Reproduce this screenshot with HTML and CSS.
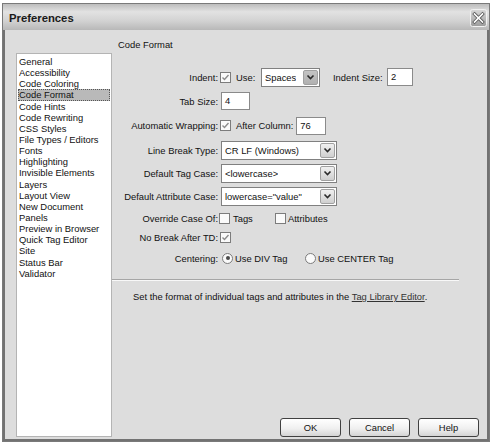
FILE: index.html
```html
<!DOCTYPE html>
<html>
<head>
<meta charset="utf-8">
<title>Preferences</title>
<link rel="stylesheet" href="styles.css">
</head>
<body>
<div class="window">
  <div class="titlebar">
    <span class="title">Preferences</span>
    <span class="close">
      <svg width="17" height="18" viewBox="0 0 17 18">
        <defs>
          <linearGradient id="cg" x1="0" y1="0" x2="0" y2="1">
            <stop offset="0" stop-color="#d8d8d8"/>
            <stop offset="1" stop-color="#9c9c9c"/>
          </linearGradient>
        </defs>
        <rect x="0.5" y="0.5" width="16" height="17" rx="2" fill="url(#cg)" stroke="#f2f2f2"/>
        <path d="M4.5 5 L12.5 13 M12.5 5 L4.5 13" stroke="#5a5a5a" stroke-width="3.2" stroke-linecap="square"/>
        <path d="M4.5 5 L12.5 13 M12.5 5 L4.5 13" stroke="#ffffff" stroke-width="1.6" stroke-linecap="square"/>
      </svg>
    </span>
  </div>
  <div class="client">
    <div class="category-list">
      <div class="item">General</div>
      <div class="item">Accessibility</div>
      <div class="item">Code Coloring</div>
      <div class="item selected">Code Format</div>
      <div class="item">Code Hints</div>
      <div class="item">Code Rewriting</div>
      <div class="item">CSS Styles</div>
      <div class="item">File Types / Editors</div>
      <div class="item">Fonts</div>
      <div class="item">Highlighting</div>
      <div class="item">Invisible Elements</div>
      <div class="item">Layers</div>
      <div class="item">Layout View</div>
      <div class="item">New Document</div>
      <div class="item">Panels</div>
      <div class="item">Preview in Browser</div>
      <div class="item">Quick Tag Editor</div>
      <div class="item">Site</div>
      <div class="item">Status Bar</div>
      <div class="item">Validator</div>
    </div>
    <div class="panel">
      <div class="panel-title">Code Format</div>
      <div class="form">
        <div class="row h24">
          <span class="label">Indent:</span>
          <span class="check ml2 checked"><svg width="9" height="9" viewBox="0 0 9 9"><path d="M1.5 4.5 L3.5 6.5 L7.5 2" fill="none" stroke="#8c8c8c" stroke-width="1.4"/></svg></span>
          <span class="text w-use">Use:</span>
          <span class="select w59"><span class="value">Spaces</span><span class="arrow pressed"><svg width="9" height="6" viewBox="0 0 9 6"><path d="M1.5 1.5 L4.5 4.5 L7.5 1.5" fill="none" stroke="#2a2a2a" stroke-width="1.6"/></svg></span></span>
          <span class="text w-isize">Indent Size:</span>
          <span class="input w26">2</span>
        </div>
        <div class="row h24">
          <span class="label">Tab Size:</span>
          <span class="input ml3 w29">4</span>
        </div>
        <div class="row h25">
          <span class="label">Automatic Wrapping:</span>
          <span class="check ml2 checked"><svg width="9" height="9" viewBox="0 0 9 9"><path d="M1.5 4.5 L3.5 6.5 L7.5 2" fill="none" stroke="#8c8c8c" stroke-width="1.4"/></svg></span>
          <span class="text w-after">After Column:</span>
          <span class="input w30">76</span>
        </div>
        <div class="row h24">
          <span class="label">Line Break Type:</span>
          <span class="select ml3 w116"><span class="value">CR LF (Windows)</span><span class="arrow"><svg width="9" height="6" viewBox="0 0 9 6"><path d="M1.5 1.5 L4.5 4.5 L7.5 1.5" fill="none" stroke="#2a2a2a" stroke-width="1.6"/></svg></span></span>
        </div>
        <div class="row h22">
          <span class="label">Default Tag Case:</span>
          <span class="select ml3 w116"><span class="value">&lt;lowercase&gt;</span><span class="arrow"><svg width="9" height="6" viewBox="0 0 9 6"><path d="M1.5 1.5 L4.5 4.5 L7.5 1.5" fill="none" stroke="#2a2a2a" stroke-width="1.6"/></svg></span></span>
        </div>
        <div class="row h24">
          <span class="label">Default Attribute Case:</span>
          <span class="select ml3 w116"><span class="value">lowercase="value"</span><span class="arrow"><svg width="9" height="6" viewBox="0 0 9 6"><path d="M1.5 1.5 L4.5 4.5 L7.5 1.5" fill="none" stroke="#2a2a2a" stroke-width="1.6"/></svg></span></span>
        </div>
        <div class="row h20">
          <span class="label">Override Case Of:</span>
          <span class="check ml1"></span>
          <span class="text w-tags">Tags</span>
          <span class="check"></span>
          <span class="text ml2">Attributes</span>
        </div>
        <div class="row h19">
          <span class="label">No Break After TD:</span>
          <span class="check ml2 checked"><svg width="9" height="9" viewBox="0 0 9 9"><path d="M1.5 4.5 L3.5 6.5 L7.5 2" fill="none" stroke="#8c8c8c" stroke-width="1.4"/></svg></span>
        </div>
        <div class="row h22">
          <span class="label">Centering:</span>
          <span class="radio ml4 on"></span>
          <span class="text w-div">Use DIV Tag</span>
          <span class="radio"></span>
          <span class="text ml2">Use CENTER Tag</span>
        </div>
      </div>
      <div class="separator"></div>
      <p class="note">Set the format of individual tags and attributes in the <a class="link" href="#">Tag Library Editor</a>.</p>
      <div class="buttons">
        <span class="button">OK</span>
        <span class="button">Cancel</span>
        <span class="button">Help</span>
      </div>
    </div>
  </div>
</div>
</body>
</html>
```
FILE: styles.css
```css
* { box-sizing: border-box; }
html, body { margin: 0; padding: 0; background: #ffffff; }
body {
  font-family: "Liberation Sans", Arial, sans-serif;
  font-size: 9.4px;
  color: #111111;
}
.window {
  margin: 3px 0 0 2px;
  width: 488px;
  height: 439px;
  border: 1px solid #7a7a7a;
  background: #dcdcdc;
  display: flex;
  flex-direction: column;
}
.titlebar {
  height: 26px;
  flex: none;
  display: flex;
  align-items: center;
  justify-content: space-between;
  padding: 0 2px 0 6px;
  background: linear-gradient(to bottom, #bdbdbd 0%, #e2e2e2 30%, #d2d2d2 65%, #b8b8b8 100%);
}
.title {
  font-family: "Liberation Sans", Arial, sans-serif;
  font-weight: bold;
  font-size: 11.3px;
  color: #1a1a1a;
  margin-top: 1px;
}
.close { display: block; width: 17px; height: 18px; margin-top: 1px; }
.close svg { display: block; }
.client {
  flex: 1;
  display: flex;
  border-left: 2px solid #727272;
  border-right: 2px solid #727272;
  border-bottom: 2px solid #727272;
  background: #dddddd;
}
.category-list {
  flex: none;
  margin: 23px 0 0 11px;
  width: 96px;
  height: 384px;
  background: #ffffff;
  border: 1px solid #b4b4b4;
  padding: 2px 1px 0 1px;
}
.item {
  line-height: 11.15px;
  height: 11.15px;
  padding-left: 1px;
  white-space: nowrap;
  overflow: hidden;
}
.item.selected {
  background: #b9b9b9;
  outline: 1px dotted #555555;
  outline-offset: -1px;
}
.panel {
  flex: 1;
  display: flex;
  flex-direction: column;
  padding-top: 9px;
}
.panel-title {
  height: 12px;
  line-height: 12px;
  padding-left: 6px;
}
.form { margin-top: 14px; display: flex; flex-direction: column; }
.row { display: flex; align-items: center; }
.h19 { height: 19px; }
.h20 { height: 20px; }
.h22 { height: 22px; }
.h24 { height: 24px; }
.h25 { height: 25px; }
.label {
  width: 106px;
  text-align: right;
  white-space: nowrap;
  flex: none;
}
.text { white-space: nowrap; flex: none; }
.ml1 { margin-left: 1px; }
.ml2 { margin-left: 2px; }
.ml3 { margin-left: 3px; }
.ml4 { margin-left: 4px; }
.w-use { margin-left: 5px; width: 25px; }
.w-isize { margin-left: 13px; width: 54px; }
.w-after { margin-left: 5px; margin-right: 3px; }
.w-tags { margin-left: 3px; width: 42px; }
.w-div { margin-left: 2px; width: 70px; }
.check {
  flex: none;
  width: 11px;
  height: 11px;
  border: 1px solid #7c7c7c;
  background: #fafafa;
  display: flex;
  align-items: center;
  justify-content: center;
}
.check svg { display: block; }
.radio {
  flex: none;
  width: 11px;
  height: 11px;
  border-radius: 50%;
  border: 1px solid #7c7c7c;
  background: #fafafa;
  position: relative;
}
.radio.on::after {
  content: "";
  position: absolute;
  left: 2.5px;
  top: 2.5px;
  width: 4px;
  height: 4px;
  border-radius: 50%;
  background: #4a4a4a;
}
.select {
  flex: none;
  height: 19px;
  border: 1px solid #808080;
  background: #ffffff;
  display: flex;
  align-items: center;
  justify-content: space-between;
  padding: 0 1px 0 3px;
}
.w59 { width: 59px; }
.w116 { width: 116px; }
.select .value { white-space: nowrap; overflow: hidden; }
.arrow {
  flex: none;
  width: 15px;
  height: 15px;
  border: 1px solid #a0a0a0;
  border-radius: 2px;
  background: linear-gradient(to bottom, #f0f0f0, #cfcfcf);
  display: flex;
  align-items: center;
  justify-content: center;
}
.arrow.pressed { background: linear-gradient(to bottom, #c4c4c4, #b0b0b0); }
.arrow svg { display: block; }
.input {
  flex: none;
  height: 18px;
  line-height: 16px;
  border: 1px solid #8a8a8a;
  background: #ffffff;
  padding-left: 3px;
}
.w26 { width: 26px; }
.w29 { width: 29px; }
.w30 { width: 30px; }
.separator {
  margin: 10px 28px 0 0;
  height: 2px;
  border-top: 1px solid #a6a6a6;
  border-bottom: 1px solid #f8f8f8;
}
.note {
  margin: 10px 0 0 0;
  padding-left: 21px;
  line-height: 12px;
  white-space: nowrap;
}
.link { color: #333333; text-decoration: underline; }
.buttons {
  margin-top: auto;
  margin-bottom: 2px;
  padding-right: 8px;
  display: flex;
  justify-content: flex-end;
  gap: 8px;
}
.button {
  width: 61px;
  height: 19px;
  border: 1px solid #404040;
  border-radius: 3px;
  background: linear-gradient(to bottom, #ffffff 0%, #f0f0f0 55%, #d4d4d4 100%);
  display: flex;
  align-items: center;
  justify-content: center;
}
```
